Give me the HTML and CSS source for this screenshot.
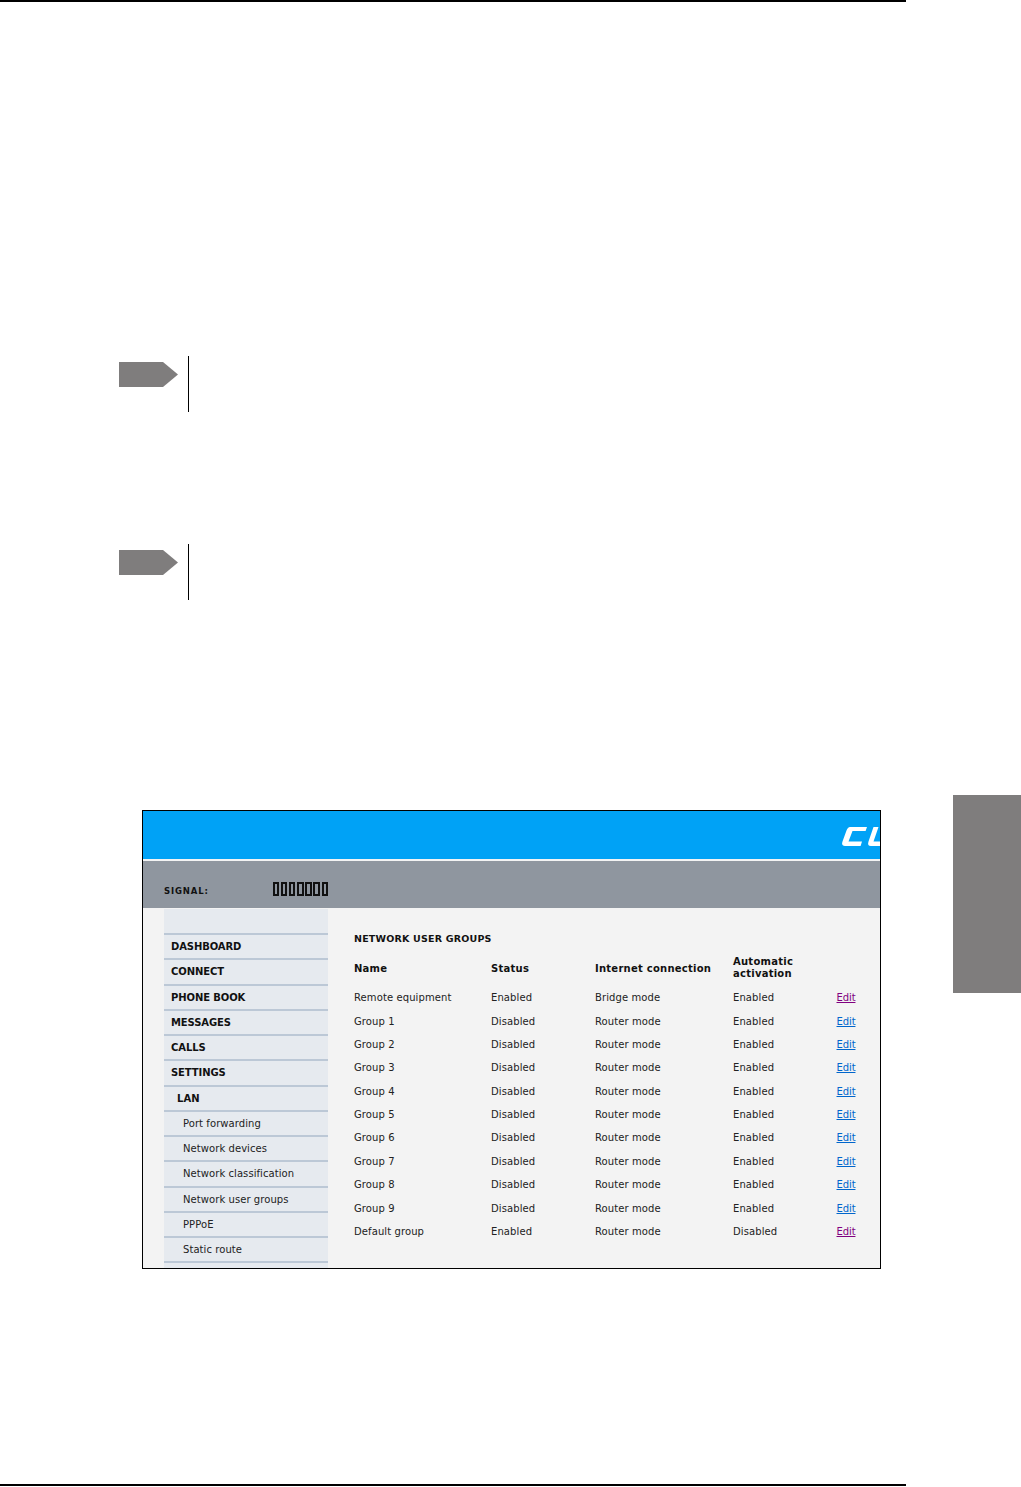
FILE: index.html
```html
<!DOCTYPE html>
<html lang="en">
<head>
<meta charset="utf-8">
<title>Network user groups</title>
<link rel="stylesheet" href="styles.css">
</head>
<body>
<div class="page">
  <div class="rule rule-top"></div>
  <div class="note note-first">
    <svg class="note-arrow" width="59" height="25" viewBox="0 0 59 25"><path d="M0 0H44L59 12.5L44 25H0Z" fill="#7f7d7d"/></svg>
    <div class="note-line"></div>
  </div>
  <div class="note note-second">
    <svg class="note-arrow" width="59" height="25" viewBox="0 0 59 25"><path d="M0 0H44L59 12.5L44 25H0Z" fill="#7f7d7d"/></svg>
    <div class="note-line"></div>
  </div>
  <div class="frame">
    <header class="banner">
      <svg class="logo" width="38" height="19" viewBox="0 0 38 19"><path d="M8 0H25L23.600 4H10.500L6.500 14.500H20L18.600 19H3Q-1 19 0.500 14.500L4.500 3.500Q5.800 0 8 0Z" fill="#fff"/><path d="M31.500 0H36.500L31.500 14.500H38V19H29Q25 19 26.500 14.500L31.500 0Z" fill="#fff"/></svg>
    </header>
    <div class="status">
      <span class="signal-label">SIGNAL:</span>
      <div class="bars"><i></i><i></i><i></i><i></i><i></i><i></i><i></i></div>
    </div>
    <div class="main">
      <nav class="side">
        <div class="side-top"></div>
        <div class="item l1">DASHBOARD</div>
        <div class="item l1">CONNECT</div>
        <div class="item l1">PHONE BOOK</div>
        <div class="item l1">MESSAGES</div>
        <div class="item l1">CALLS</div>
        <div class="item l1">SETTINGS</div>
        <div class="item l2">LAN</div>
        <div class="item l3">Port forwarding</div>
        <div class="item l3">Network devices</div>
        <div class="item l3">Network classification</div>
        <div class="item l3">Network user groups</div>
        <div class="item l3">PPPoE</div>
        <div class="item l3">Static route</div>
        <div class="item end"></div>
      </nav>
      <section class="content">
        <h1 class="title">NETWORK USER GROUPS</h1>
        <div class="grid head">
          <span>Name</span><span>Status</span><span>Internet connection</span><span>Automatic<br>activation</span><span></span>
        </div>
        <div class="grid row"><span>Remote equipment</span><span>Enabled</span><span>Bridge mode</span><span>Enabled</span><a class="visited" href="#">Edit</a></div>
        <div class="grid row"><span>Group 1</span><span>Disabled</span><span>Router mode</span><span>Enabled</span><a href="#">Edit</a></div>
        <div class="grid row"><span>Group 2</span><span>Disabled</span><span>Router mode</span><span>Enabled</span><a href="#">Edit</a></div>
        <div class="grid row"><span>Group 3</span><span>Disabled</span><span>Router mode</span><span>Enabled</span><a href="#">Edit</a></div>
        <div class="grid row"><span>Group 4</span><span>Disabled</span><span>Router mode</span><span>Enabled</span><a href="#">Edit</a></div>
        <div class="grid row"><span>Group 5</span><span>Disabled</span><span>Router mode</span><span>Enabled</span><a href="#">Edit</a></div>
        <div class="grid row"><span>Group 6</span><span>Disabled</span><span>Router mode</span><span>Enabled</span><a href="#">Edit</a></div>
        <div class="grid row"><span>Group 7</span><span>Disabled</span><span>Router mode</span><span>Enabled</span><a href="#">Edit</a></div>
        <div class="grid row"><span>Group 8</span><span>Disabled</span><span>Router mode</span><span>Enabled</span><a href="#">Edit</a></div>
        <div class="grid row"><span>Group 9</span><span>Disabled</span><span>Router mode</span><span>Enabled</span><a href="#">Edit</a></div>
        <div class="grid row"><span>Default group</span><span>Enabled</span><span>Router mode</span><span>Disabled</span><a class="visited" href="#">Edit</a></div>
      </section>
    </div>
  </div>
  <div class="rule rule-bottom"></div>
  <div class="side-tab"></div>
</div>
</body>
</html>
```
FILE: styles.css
```css
* { box-sizing: border-box; }
html, body { margin: 0; padding: 0; background: #fff; }
body { font-family: "DejaVu Sans", Verdana, sans-serif; color: #222; }
.page { position: relative; width: 1021px; height: 1487px; overflow: hidden; }

.rule { width: 906px; background: #000; }
.rule-top { height: 2px; }
.rule-bottom { height: 2px; margin-top: 215px; }

.note { display: flex; align-items: flex-start; margin-left: 119px; height: 56px; }
.note-first { margin-top: 354px; }
.note-second { margin-top: 132px; }
.note-arrow { display: block; margin-top: 6px; }
.note-line { width: 1px; height: 56px; background: #000; margin-left: 10px; }

.frame { width: 739px; height: 459px; margin: 210px 0 0 142px; border: 1px solid #000; overflow: hidden; background: #f3f3f3; }
.banner { height: 48px; background: #00a2f6; display: flex; justify-content: flex-end; align-items: flex-start; padding-top: 16px; }
.logo { display: block; }
.status { height: 47px; margin-top: 2px; background: #8f969f; display: flex; align-items: center; padding-left: 21px; }
.signal-label { font-size: 8.500px; font-weight: bold; color: #111; letter-spacing: 0.85px; width: 109px; margin-top: 12px; }
.bars { display: flex; gap: 1.800px; margin-top: 8px; }
.bars i { display: block; width: 6.300px; height: 14px; border: 2px solid #111; background: #8f969f; }

.main { display: flex; height: 362px; padding-top: 1px; }
.side { width: 164px; margin-left: 21px; background: #e6eaef; flex: none; }
.side-top { height: 24px; }
.item { height: 25.250px; border-top: 2px solid #bcc8d6; display: flex; align-items: center; font-size: 10px; line-height: 1; padding-top: 1px; color: #222; letter-spacing: 0.07px; }
.l1 { padding-left: 7px; font-weight: bold; color: #111; letter-spacing: -0.1px; }
.l2 { padding-left: 13px; font-weight: bold; color: #111; }
.l3 { padding-left: 19px; }
.item.end { height: 8px; }

.content { flex: 1; padding: 24px 0 0 26px; }
.title { margin: 0; font-size: 9.500px; line-height: 12px; font-weight: bold; color: #111; letter-spacing: 0.2px; }
.grid { display: grid; grid-template-columns: 137px 104px 138px 103.500px 30px; align-items: center; font-size: 10px; letter-spacing: 0.1px; }
.head { font-weight: bold; color: #111; height: 24px; margin-top: 12px; line-height: 11.500px; margin-bottom: 5px; letter-spacing: 0.25px; }
.head span:nth-child(4) { margin-top: -3px; }
.row { height: 23.400px; margin-top: -0.020px; }
.row a { color: #0066cc; text-decoration: underline; width: 19px; letter-spacing: -0.1px; }
.row a.visited { color: #800080; }

.side-tab { position: absolute; left: 953px; top: 795px; width: 68px; height: 198px; background: #7f7d7d; }
```
